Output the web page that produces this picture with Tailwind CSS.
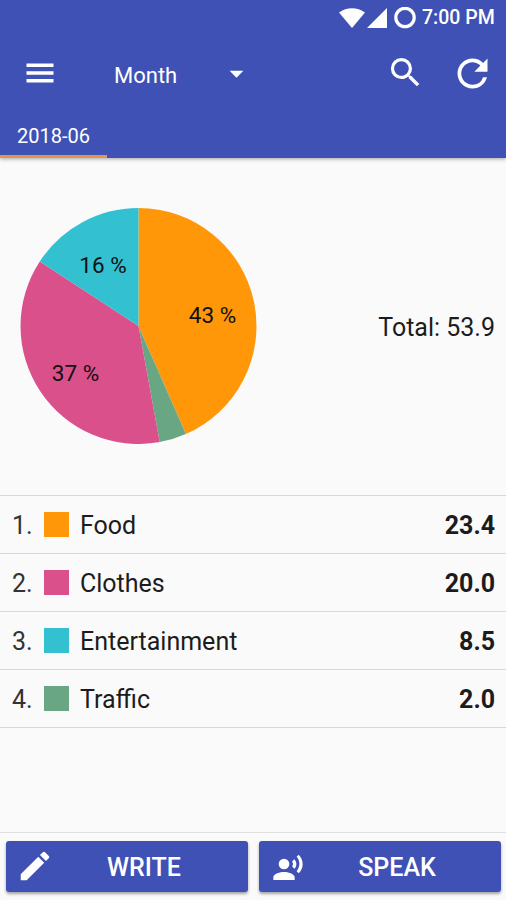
<!DOCTYPE html>
<html lang="en">

<head>
    <meta charset="UTF-8">
    <meta name="viewport" content="width=device-width, initial-scale=1.0">
    <title>Expenses</title>
    <!-- Tailwind CSS CDN -->
    <script src="https://cdn.jsdelivr.net/npm/@tailwindcss/browser@4"></script>
</head>

<body class="bg-[#fafafa] font-[Roboto,sans-serif] text-[#1c1c1c]">
    <div class="w-[506px] h-[900px] flex flex-col overflow-hidden">
        <header class="h-[158px] shrink-0 bg-[#3f51b5] text-white flex flex-col shadow-[0_1px_4px_rgba(0,0,0,0.35)]">
            <!-- Status bar -->
            <div class="h-[36px] flex items-center justify-end pr-[11px]">
                <svg class="w-[26px] h-[20px]" viewBox="0 0 26 20" fill="currentColor">
                    <path d="M0 4.500C7.500-1.300 18.500-1.300 26 4.500L13 20z" />
                </svg>
                <svg class="w-[20px] h-[20px] ml-[2px]" viewBox="0 0 20 20" fill="currentColor">
                    <path d="M20 0v20H0z" />
                </svg>
                <svg class="w-[22px] h-[22px] ml-[7px]" viewBox="0 0 22 22" fill="none" stroke="currentColor" stroke-width="3.2">
                    <circle cx="11" cy="10.500" r="9.200" />
                </svg>
                <span class="ml-[6px] w-[73px] text-[19.500px] font-medium whitespace-nowrap">7:00 PM</span>
            </div>

            <!-- Toolbar -->
            <div class="h-[76px] flex items-center pl-[22px] pr-[11px]">
                <svg class="size-[36px]" viewBox="0 0 36 36" fill="currentColor">
                    <path d="M4.500 7.500h27v3.500h-27zM4.500 15.200h27v3.500h-27zM4.500 23h27v3.500h-27z" />
                </svg>
                <span class="ml-[56px] mt-[2px] w-[97px] text-[22px]">Month</span>
                <svg class="size-[33px] ml-[9px] mb-[1px]" viewBox="0 0 24 24" fill="currentColor">
                    <path d="M7 10l5 5 5-5z" />
                </svg>
                <svg class="size-[39px] ml-auto mb-[3px]" viewBox="0 0 24 24" fill="currentColor">
                    <path d="M15.500 14h-.79l-.28-.27A6.471 6.471 0 0 0 16 9.500 6.500 6.500 0 1 0 9.500 16c1.610 0 3.090-.59 4.230-1.570l.27.28v.79l5 4.990L20.490 19l-4.990-5zm-6 0C7.010 14 5 11.990 5 9.500S7.010 5 9.500 5 14 7.010 14 9.500 11.990 14 9.500 14z" />
                </svg>
                <svg class="size-[45px] ml-[25px] mb-[2px]" viewBox="0 0 24 24" fill="currentColor">
                    <path d="M17.650 6.350A7.958 7.958 0 0 0 12 4c-4.420 0-7.990 3.580-7.990 8s3.570 8 7.990 8c3.730 0 6.840-2.550 7.730-6h-2.080A5.990 5.990 0 0 1 12 18c-3.310 0-6-2.690-6-6s2.690-6 6-6c1.660 0 3.140.69 4.220 1.780L13 11h7V4l-2.350 2.350z" />
                </svg>
            </div>

            <!-- Tabs -->
            <div class="flex-1 flex">
                <div class="w-[107px] flex items-center justify-center pt-[4px] border-b-3 border-[#e8924a] text-[20px]">2018-06</div>
            </div>
        </header>

        <!-- Chart -->
        <section class="h-[337px] shrink-0 flex items-center justify-between pb-[1px] pl-[20px] pr-[11px]">
            <svg class="w-[237px] h-[236px]" viewBox="0 0 237 236">
                <path fill="#ff9708" d="M118.500 118V0A118 118 0 0 1 165.900 226.050z" />
                <path fill="#69a784" d="M118.500 118L165.900 226.050A118 118 0 0 1 139.700 234.100z" />
                <path fill="#d9508a" d="M118.500 118L139.700 234.100A118 118 0 0 1 19.800 53.400z" />
                <path fill="#33c1d2" d="M118.500 118L19.800 53.400A118 118 0 0 1 118.500 0z" />
                <g class="text-[22.500px]" fill="#111" text-anchor="middle">
                    <text x="192.500" y="115">43 %</text>
                    <text x="55.500" y="173">37 %</text>
                    <text x="83" y="65">16 %</text>
                </g>
            </svg>
            <span class="pt-[3px] text-[25px]">Total: 53.9</span>
        </section>

        <!-- Categories -->
        <ul class="border-t border-[#d8d8d8] text-[25px]">
            <li class="h-[58px] flex items-center pl-[12px] pr-[11px] border-b border-[#d8d8d8]">
                <span class="w-[32px] pt-[3px] text-[#333]">1.</span>
                <span class="size-[25px] bg-[#ff9708]"></span>
                <span class="ml-[11px] pt-[3px]">Food</span>
                <span class="ml-auto pt-[3px] font-bold">23.4</span>
            </li>
            <li class="h-[58px] flex items-center pl-[12px] pr-[11px] border-b border-[#d8d8d8]">
                <span class="w-[32px] pt-[3px] text-[#333]">2.</span>
                <span class="size-[25px] bg-[#d9508a]"></span>
                <span class="ml-[11px] pt-[3px]">Clothes</span>
                <span class="ml-auto pt-[3px] font-bold">20.0</span>
            </li>
            <li class="h-[58px] flex items-center pl-[12px] pr-[11px] border-b border-[#d8d8d8]">
                <span class="w-[32px] pt-[3px] text-[#333]">3.</span>
                <span class="size-[25px] bg-[#33c1d2]"></span>
                <span class="ml-[11px] pt-[3px]">Entertainment</span>
                <span class="ml-auto pt-[3px] font-bold">8.5</span>
            </li>
            <li class="h-[58px] flex items-center pl-[12px] pr-[11px] border-b border-[#d8d8d8]">
                <span class="w-[32px] pt-[3px] text-[#333]">4.</span>
                <span class="size-[25px] bg-[#69a784]"></span>
                <span class="ml-[11px] pt-[3px]">Traffic</span>
                <span class="ml-auto pt-[3px] font-bold">2.0</span>
            </li>
        </ul>

        <!-- Actions -->
        <footer class="mt-auto h-[68px] flex gap-[11px] pt-[8px] pl-[6px] pr-[5px] border-t border-[#dedede] text-white text-[25px] font-medium">
            <button class="h-[51px] w-[242px] flex items-center pl-[10px] rounded-[3px] bg-[#3f51b5] shadow-[0_2px_3px_rgba(0,0,0,0.35)]">
                <svg class="size-[38px] mb-[1px]" viewBox="0 0 24 24" fill="currentColor">
                    <path d="M3 17.250V21h3.750L17.810 9.940l-3.750-3.750L3 17.250zM20.710 7.040a1 1 0 0 0 0-1.410l-2.340-2.340a1 1 0 0 0-1.410 0l-1.830 1.830 3.750 3.750 1.830-1.830z" />
                </svg>
                <span class="flex-1 text-center pt-[3px] pr-[14px]">WRITE</span>
            </button>
            <button class="h-[51px] w-[242px] flex items-center pl-[13px] rounded-[3px] bg-[#3f51b5] shadow-[0_2px_3px_rgba(0,0,0,0.35)]">
                <svg class="size-[32px] mt-[3px]" viewBox="0 0 24 24" fill="currentColor">
                    <circle cx="9" cy="9" r="4" />
                    <path d="M9 15c-2.670 0-8 1.340-8 4v2h16v-2c0-2.660-5.330-4-8-4zM16.760 5.360l-1.680 1.690c.84 1.180.84 2.710 0 3.890l1.680 1.690c2.020-2.020 2.020-5.070 0-7.270zM20.070 2l-1.630 1.630c2.770 3.020 2.770 7.560 0 10.740L20.070 16c3.900-3.890 3.910-9.950 0-14z" />
                </svg>
                <span class="flex-1 text-center pt-[3px] pr-[11px]">SPEAK</span>
            </button>
        </footer>
    </div>
</body>

</html>
